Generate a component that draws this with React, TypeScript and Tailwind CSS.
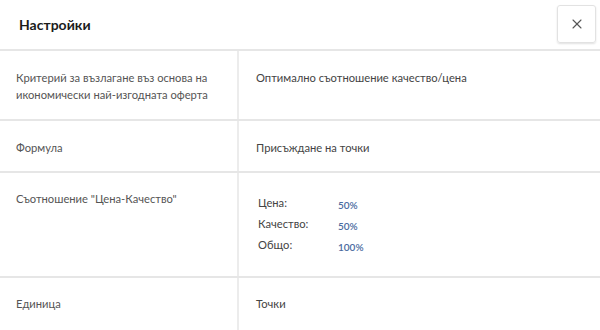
import React from 'react';
import { X } from 'lucide-react';

const rows = [
  { label: 'Критерий за възлагане въз основа на икономически най-изгодната оферта', value: 'Оптимално съотношение качество/цена' },
  { label: 'Формула', value: 'Присъждане на точки' },
];

export default function App() {
  return (
    <div className="w-[600px] h-[330px] bg-white overflow-hidden" style={{ fontFamily: 'Lato, "Noto Sans", sans-serif' }}>
      {/* Header */}
      <div className="flex items-center justify-between h-[51px] pl-[19px] pr-[4px] border-b-2 border-[#e6e6e6]">
        <h3 className="text-[14px] font-bold text-[#1b1b1b]">Настройки</h3>
        <button className="flex items-center justify-center w-[39px] h-[38px] mb-[2px] border border-[#e2e2e2] rounded-[3px] shadow-[0_1px_2px_rgba(0,0,0,0.12)] text-[#555]">
          <X className="h-4 w-4" strokeWidth={1.6} />
        </button>
      </div>

      {/* Row 1 */}
      <div className="grid grid-cols-[239px_1fr] h-[70px] border-b-2 border-[#e6e6e6]">
        <div className="border-r-2 border-[#ececec] pl-[16px] pr-3 pt-[18px] text-[11.2px] leading-[17px] text-[#555]">
          {rows[0].label}
        </div>
        <div className="pl-[17px] pt-[18px] text-[11.2px] leading-[17px] text-[#444]">{rows[0].value}</div>
      </div>

      {/* Row 2 */}
      <div className="grid grid-cols-[239px_1fr] h-[52px] border-b-2 border-[#e6e6e6]">
        <div className="border-r-2 border-[#ececec] pl-[16px] pt-[18px] text-[11.2px] leading-[17px] text-[#555]">
          {rows[1].label}
        </div>
        <div className="pl-[17px] pt-[18px] text-[11.2px] leading-[17px] text-[#444]">{rows[1].value}</div>
      </div>

      {/* Row 3 */}
      <div className="grid grid-cols-[239px_1fr] h-[105px] border-b-2 border-[#e6e6e6]">
        <div className="border-r-2 border-[#ececec] pl-[16px] pt-[17px] text-[11.2px] leading-[17px] text-[#555]">
          Съотношение "Цена-Качество"
        </div>
        <div className="pl-[19px] pt-[22px] flex flex-col gap-[4px]">
          {[
            ['Цена:', '50%'],
            ['Качество:', '50%'],
            ['Общо:', '100%'],
          ].map(([k, v]) => (
            <div key={k} className="flex items-center h-[17px]">
              <span className="w-[80px] text-[11.2px] text-[#444]">{k}</span>
              <span className="text-[10px] font-semibold text-[#4a6aa0] mt-[3px]">{v}</span>
            </div>
          ))}
        </div>
      </div>

      {/* Row 4 */}
      <div className="grid grid-cols-[239px_1fr] h-[60px]">
        <div className="border-r-2 border-[#ececec] pl-[16px] pt-[17px] text-[11.2px] leading-[17px] text-[#555]">
          Единица
        </div>
        <div className="pl-[17px] pt-[17px] text-[11.2px] leading-[17px] text-[#444]">Точки</div>
      </div>
    </div>
  );
}
